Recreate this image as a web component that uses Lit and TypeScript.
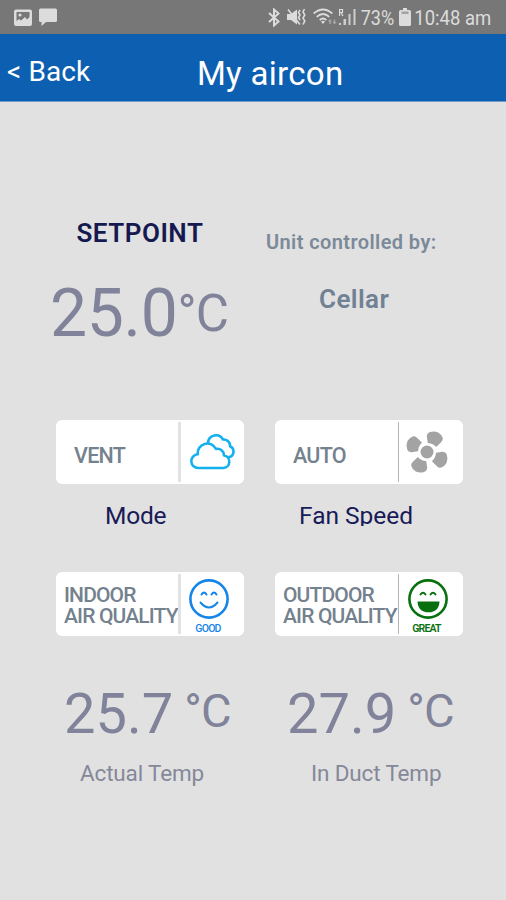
import { LitElement, html, css, svg } from "lit";
import { customElement, property } from "lit/decorators.js";

const clouds = svg`<svg width="46" height="38" viewBox="0 0 46 38" fill="#fff" stroke="#14b1ee" stroke-width="2.600" stroke-linejoin="round">
  <path d="M18 10A8 8 0 0 1 33 6.500A6.300 6.300 0 0 1 40 13.300A5.700 5.700 0 0 1 39.500 24H30Z"/>
  <path d="M8.500 35A6.700 6.700 0 0 1 7.800 21.300A9.600 9.600 0 0 1 26 16A6.500 6.500 0 0 1 34 22.500A6.300 6.300 0 0 1 33.500 35Z"/>
</svg>`;

const fan = svg`<svg width="44" height="44" viewBox="-22 -22 44 44" fill="#a3a3a3">
  <circle r="6.500"/>
  ${[0, 90, 180, 270].map(
    (a) => svg`<path transform="rotate(${a})" d="M.8-9L-.2-15.500Q-.2-18.700 3-19.900Q7.200-21.300 11.200-19.400Q14.800-17.300 15.800-13.700Q16.100-11.500 14.300-10L9.200-4.900Q6.500-8.500 .8-9Z"/>`
  )}
</svg>`;

const smile = svg`<svg width="42" height="42" viewBox="-21 -21 42 42" fill="none" stroke="#1585e8" stroke-width="2.600" stroke-linecap="round">
  <circle r="18.600"/>
  <path stroke-width="2" d="M-7.500-4.500Q-5-8.500-2.500-4.500M2.500-4.500Q5-8.500 7.500-4.500M-8.500 3.500Q0 13.500 8.500 3.500"/>
</svg>`;

const grin = svg`<svg width="42" height="42" viewBox="-21 -21 42 42" fill="none" stroke="#08700f" stroke-width="2.600" stroke-linecap="round">
  <circle r="18.600"/>
  <path stroke-width="2" d="M-7.500-4.500Q-5-8-2.500-4.500M2.500-4.500Q5-8 7.500-4.500"/>
  <path fill="#08700f" stroke="none" d="M-10.500 2.500H11.500Q11 13.300 .5 13.300T-10.500 2.500Z"/>
</svg>`;

@customElement("status-bar")
class StatusBar extends LitElement {
  static styles = css`
    :host { display: flex; align-items: center; height: 34px; background: #777; color: #dcdcdc; padding: 0 15px 0 14px; box-sizing: border-box; }
    svg { display: block; flex: none; fill: #dcdcdc; }
    .msg { margin-left: 7px; margin-right: auto; }
    .mute { margin-left: 7px; }
    .wifi { margin-left: 7px; }
    .signal { margin-left: 1px; }
    .t { display: inline-block; font-size: 20px; line-height: 34px; white-space: nowrap; margin-top: 2px; transform: scaleX(.9); transform-origin: right; }
    .pct { margin-left: 1px; }
    .bat { margin: 0 -3px 0 5px; }
    .clock { transform: scaleX(.925); }
  `;
  render() {
    return html`
      <svg width="18" height="17" viewBox="0 0 18 17"><path fill-rule="evenodd" d="M2 .5H16Q18 .5 18 2.500V15Q18 17 16 17H2Q0 17 0 15V2.500Q0 .5 2 .5ZM2.500 3V12L5 10L7 11.500L11 8L13 10.500L15.500 8V3Z"/><circle cx="6" cy="6" r="1.600"/></svg>
      <svg class="msg" width="18" height="18" viewBox="0 0 18 18"><path d="M1.500 .5H16.500Q18 .5 18 2V12.500Q18 14 16.500 14H7L2.500 18V14H1.500Q0 14 0 12.500V2Q0 .5 1.500 .5Z"/></svg>
      <svg width="12" height="19" viewBox="0 0 12 19"><path fill="none" stroke="#dcdcdc" stroke-width="2" d="M1 5L10.500 13.500L6 17.500V1.500L10.500 5.500L1 14"/></svg>
      <svg class="mute" width="19" height="18" viewBox="0 0 19 18"><path d="M0 6H4L10 1.500V16.500L4 12H0Z"/><path fill="none" stroke="#dcdcdc" stroke-width="1.600" d="M1 1.500L13 16.500M13 2L11.500 4.500L13 7L11.500 9.500L13 12M17.500 1L16 4L17.800 7L16 10L17.800 13L16 16.500"/></svg>
      <svg class="wifi" width="24" height="18" viewBox="0 0 24 18"><path fill="none" stroke="#dcdcdc" stroke-width="1.700" d="M.7 5.500Q10 -2.500 19.300 5.500M3.700 8.800Q10 3.200 16.300 8.800M6.700 12Q10 9 13.300 12"/><path d="M8 13.500Q10 12 12 13.500L10 16Z"/><path d="M17 11L15 13.500H16.300V16H17.700V13.500H19ZM21.500 16.500L19.500 14H20.800V11.500H22.200V14H23.500Z" opacity=".5"/></svg>
      <svg class="signal" width="18" height="18" viewBox="0 0 18 18"><path d="M1 15H3V17H1ZM5.500 11H8V17H5.500ZM10.500 6H12.500V17H10.500ZM15.500 1H17.500V17H15.500Z" opacity=".85"/><path fill="none" stroke="#dcdcdc" stroke-width="1.200" d="M1.600 8V1.500H4.500V4.500H1.600M3 4.500L5 8"/></svg>
      <span class="t pct">73%</span>
      <svg class="bat" width="12" height="18" viewBox="0 0 12 18"><path d="M4 0H8V2H10.500Q12 2 12 3.500V16.500Q12 18 10.500 18H1.500Q0 18 0 16.500V3.500Q0 2 1.500 2H4Z"/><path fill="#a2a2a2" d="M2.500 3.500H9.500V6H2.500Z"/></svg>
      <span class="t clock">10:48 am</span>
    `;
  }
}

@customElement("option-card")
class OptionCard extends LitElement {
  @property() label = "";
  @property() caption = "";
  @property({ reflect: true }) tone = "";
  @property({ attribute: false }) icon: unknown;
  static styles = css`
    :host { display: grid; grid-template-columns: minmax(0, 1fr) 66px; height: 64px; background: #fff; border-radius: 6px; color: #74818e; }
    .label { display: flex; align-items: center; padding: 6px 0 0 18px; white-space: pre; font-weight: 500; font-size: 21.500px; line-height: 21px; letter-spacing: -0.75px; }
    .label.quality { padding: 4px 0 0 8px; font-size: 21px; letter-spacing: -0.85px; }
    .icon { margin: 2px 0; border-left: 3px solid #e2e2e2; display: flex; flex-direction: column; align-items: center; justify-content: center; }
    .icon.quality { justify-content: flex-start; padding: 4px 7px 0 0; }
    :host(.thin) .icon { border-left: 1px solid #b4b4b4; margin-left: 1px; padding-right: 8px; }
    :host(.thin) .icon.quality { padding-right: 7px; }
    .good { color: #1585e8; }
    .great { color: #08700f; }
    .cap { font-size: 10.500px; line-height: 10px; letter-spacing: -0.8px; margin: 4px 0 0 -2px; font-weight: 600; }
    .good .cap { font-weight: 500; }
    svg { display: block; flex: none; }
  `;
  render() {
    const q = this.caption ? "quality" : "";
    return html`<div class="label ${q}">${this.label}</div>
      <div class="icon ${q} ${this.tone}">${this.icon}${this.caption ? html`<span class="cap">${this.caption}</span>` : ""}</div>`;
  }
}

@customElement("app-root")
class AppRoot extends LitElement {
  static styles = css`
    :host { display: block; height: 900px; background: #e1e1e1; font-family: Roboto, sans-serif; overflow: hidden; }
    header { display: grid; grid-template-columns: 197px 1fr; align-items: center; height: 68px; background: #0d60b1; color: #fff; white-space: nowrap; box-sizing: border-box; border-bottom: 1px solid #6f9cc8; }
    .back { font-size: 28px; padding: 7px 0 0 7px; letter-spacing: 0.1px; }
    .title { font-size: 33px; padding-top: 11px; letter-spacing: 0.3px; }
    .cols { display: grid; grid-template-columns: 188px 188px; column-gap: 31px; padding-left: 56px; white-space: nowrap; }
    .set { padding-top: 111px; height: 207px; color: #80839a; }
    .setpoint { font-size: 26px; font-weight: 600; line-height: 40px; color: #161950; padding-left: 20.500px; letter-spacing: 0.5px; }
    .big { display: flex; margin: 21px 0 0 -6px; font-size: 66px; line-height: 80px; letter-spacing: -0.3px; }
    .big .unit { font-size: 51px; line-height: 79px; letter-spacing: -0.7px; }
    .by { font-size: 20px; font-weight: 600; line-height: 40px; margin: 9px 0 0 -9px; color: #7b8999; letter-spacing: 0.4px; }
    .unitname { font-size: 26px; font-weight: 600; line-height: 40px; padding-left: 44px; margin-top: 17px; color: #718195; letter-spacing: 0.4px; }
    .names { font-size: 24.500px; line-height: 40px; color: #191a58; padding-top: 12px; height: 30px; }
    .mode { padding-left: 49px; letter-spacing: -0.2px; }
    .speed { padding-left: 24px; height: 30px; overflow: hidden; }
    .quality { padding-top: 46px; }
    .temps { padding-top: 43px; color: #80839a; }
    .temp { display: flex; font-size: 56px; line-height: 70px; padding-left: 8px; }
    .temp + .temp { padding-left: 12px; }
    .temp .unit { font-size: 47px; line-height: 64px; margin-left: 11px; letter-spacing: -0.7px; }
    .captions { font-size: 22.500px; line-height: 30px; padding-top: 9px; color: #858899; letter-spacing: -0.15px; }
    .actual { padding-left: 24px; }
    .duct { padding-left: 36px; }
  `;
  render() {
    return html`
      <status-bar></status-bar>
      <header><span class="back">&lt; Back</span><span class="title">My aircon</span></header>
      <section class="cols set">
        <div><div class="setpoint">SETPOINT</div><div class="big"><span>25.0</span><span class="unit">°C</span></div></div>
        <div><div class="by">Unit controlled by:</div><div class="unitname">Cellar</div></div>
      </section>
      <section class="cols">
        <option-card label="VENT" .icon=${clouds}></option-card>
        <option-card class="thin" label="AUTO" .icon=${fan}></option-card>
      </section>
      <section class="cols names"><span class="mode">Mode</span><span class="speed">Fan Speed</span></section>
      <section class="cols quality">
        <option-card .label=${"INDOOR\nAIR QUALITY"} caption="GOOD" tone="good" .icon=${smile}></option-card>
        <option-card class="thin" .label=${"OUTDOOR\nAIR QUALITY"} caption="GREAT" tone="great" .icon=${grin}></option-card>
      </section>
      <section class="cols temps">
        <div class="temp"><span>25.7</span><span class="unit">°C</span></div>
        <div class="temp"><span>27.9</span><span class="unit">°C</span></div>
      </section>
      <section class="cols captions"><span class="actual">Actual Temp</span><span class="duct">In Duct Temp</span></section>
    `;
  }
}
